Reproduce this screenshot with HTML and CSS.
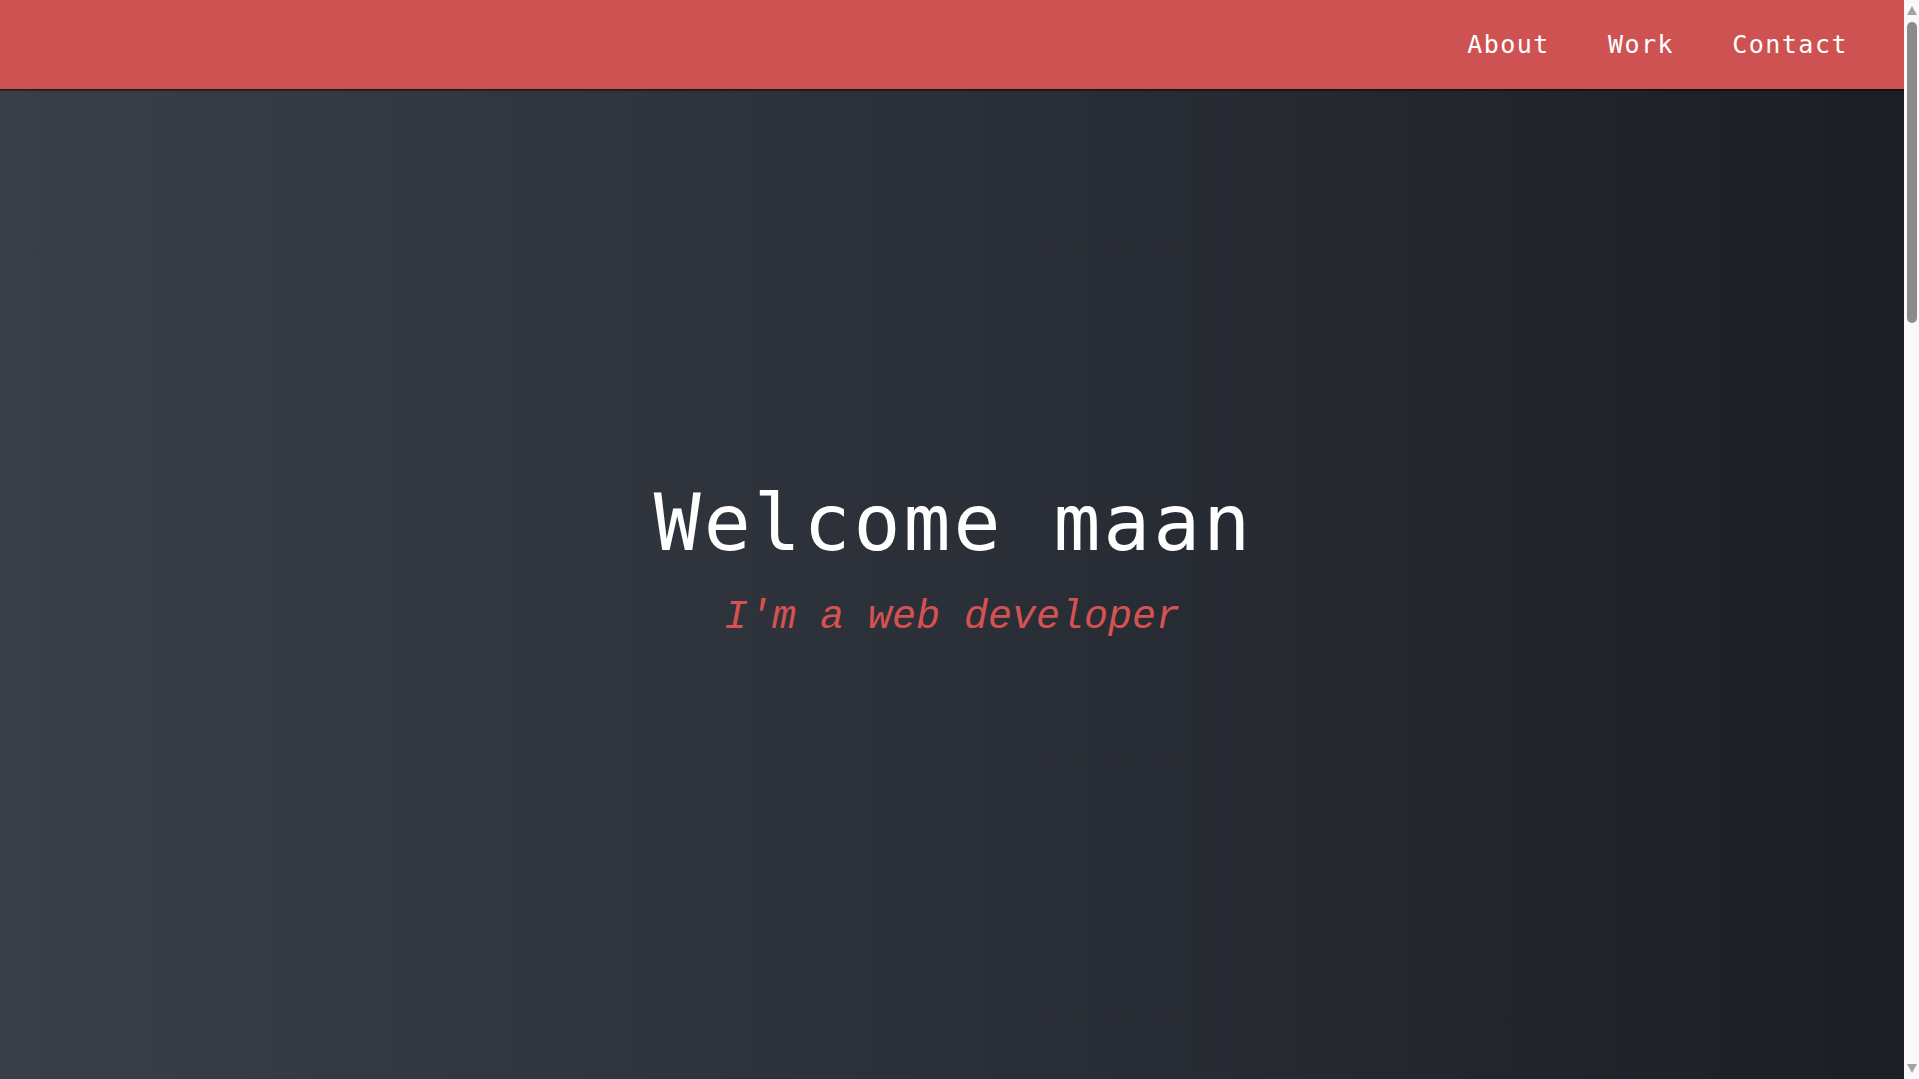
FILE: index.html
```html
<!DOCTYPE html>
<html lang="en">
<head>
<meta charset="utf-8">
<title>Welcome maan</title>
<link rel="stylesheet" href="styles.css">
</head>
<body>
<header class="topbar">
  <nav class="nav">
    <a class="nav-link" href="#about">About</a>
    <a class="nav-link" href="#work">Work</a>
    <a class="nav-link" href="#contact">Contact</a>
  </nav>
</header>
<main>
  <section class="hero">
    <h1 class="hero-title">Welcome maan</h1>
    <p class="hero-sub">I'm a web developer</p>
  </section>
  <section class="section" id="about"></section>
  <section class="section" id="work"></section>
  <section class="section" id="contact"></section>
</main>
<div class="scrollbar" aria-hidden="true">
  <svg class="scrollbar-svg" width="15" height="1079" viewBox="0 0 15 1079">
    <polygon points="3,15 13,15 8,6" fill="#a3a3a3"/>
    <rect x="3" y="22" width="10" height="301" rx="5" fill="#8b8b8b"/>
    <polygon points="3,1064 13,1064 8,1073" fill="#a3a3a3"/>
  </svg>
</div>
</body>
</html>
```

FILE: styles.css
```css
html, body {
  margin: 0;
  padding: 0;
}
body {
  margin-right: 15px;
  background: #2a2e36;
  font-family: "DejaVu Sans Mono", "Liberation Mono", monospace;
}
.topbar {
  height: 89px;
  background: #cf5252;
  display: flex;
  justify-content: flex-end;
  align-items: center;
  box-shadow: 0 1px 2px rgba(0,0,0,0.85);
  position: relative;
  z-index: 2;
}
.nav {
  display: flex;
  gap: 58px;
  padding-right: 56px;
}
.nav-link {
  color: #ffffff;
  text-decoration: none;
  font-size: 25px;
  letter-spacing: 1.5px;
  line-height: 24px;
}
.hero {
  min-height: 990px;
  box-sizing: border-box;
  padding-top: 395px;
  background: linear-gradient(to right, #3a3e47 0%, #2b2f37 50%, #1b1e25 100%);
  display: flex;
  flex-direction: column;
  align-items: center;
}
.hero-title {
  margin: 0;
  color: #ffffff;
  font-family: "DejaVu Sans Mono", monospace;
  font-weight: normal;
  font-size: 78px;
  line-height: 78px;
  letter-spacing: 3px;
  padding-left: 3px;
}
.hero-sub {
  margin: 36px 0 0;
  color: #d65252;
  font-family: "Courier New", "Nimbus Mono PS", "FreeMono", "Liberation Mono", monospace;
  font-style: italic;
  font-size: 40px;
  line-height: 40px;
}
.section {
  height: 899px;
  background: linear-gradient(to right, #3a3e47 0%, #2b2f37 50%, #1b1e25 100%);
}
.scrollbar {
  position: fixed;
  top: 0;
  right: 0;
  width: 15px;
  height: 100vh;
  background: #f9f9f9;
  z-index: 10;
}
.scrollbar-svg {
  display: block;
}
```
